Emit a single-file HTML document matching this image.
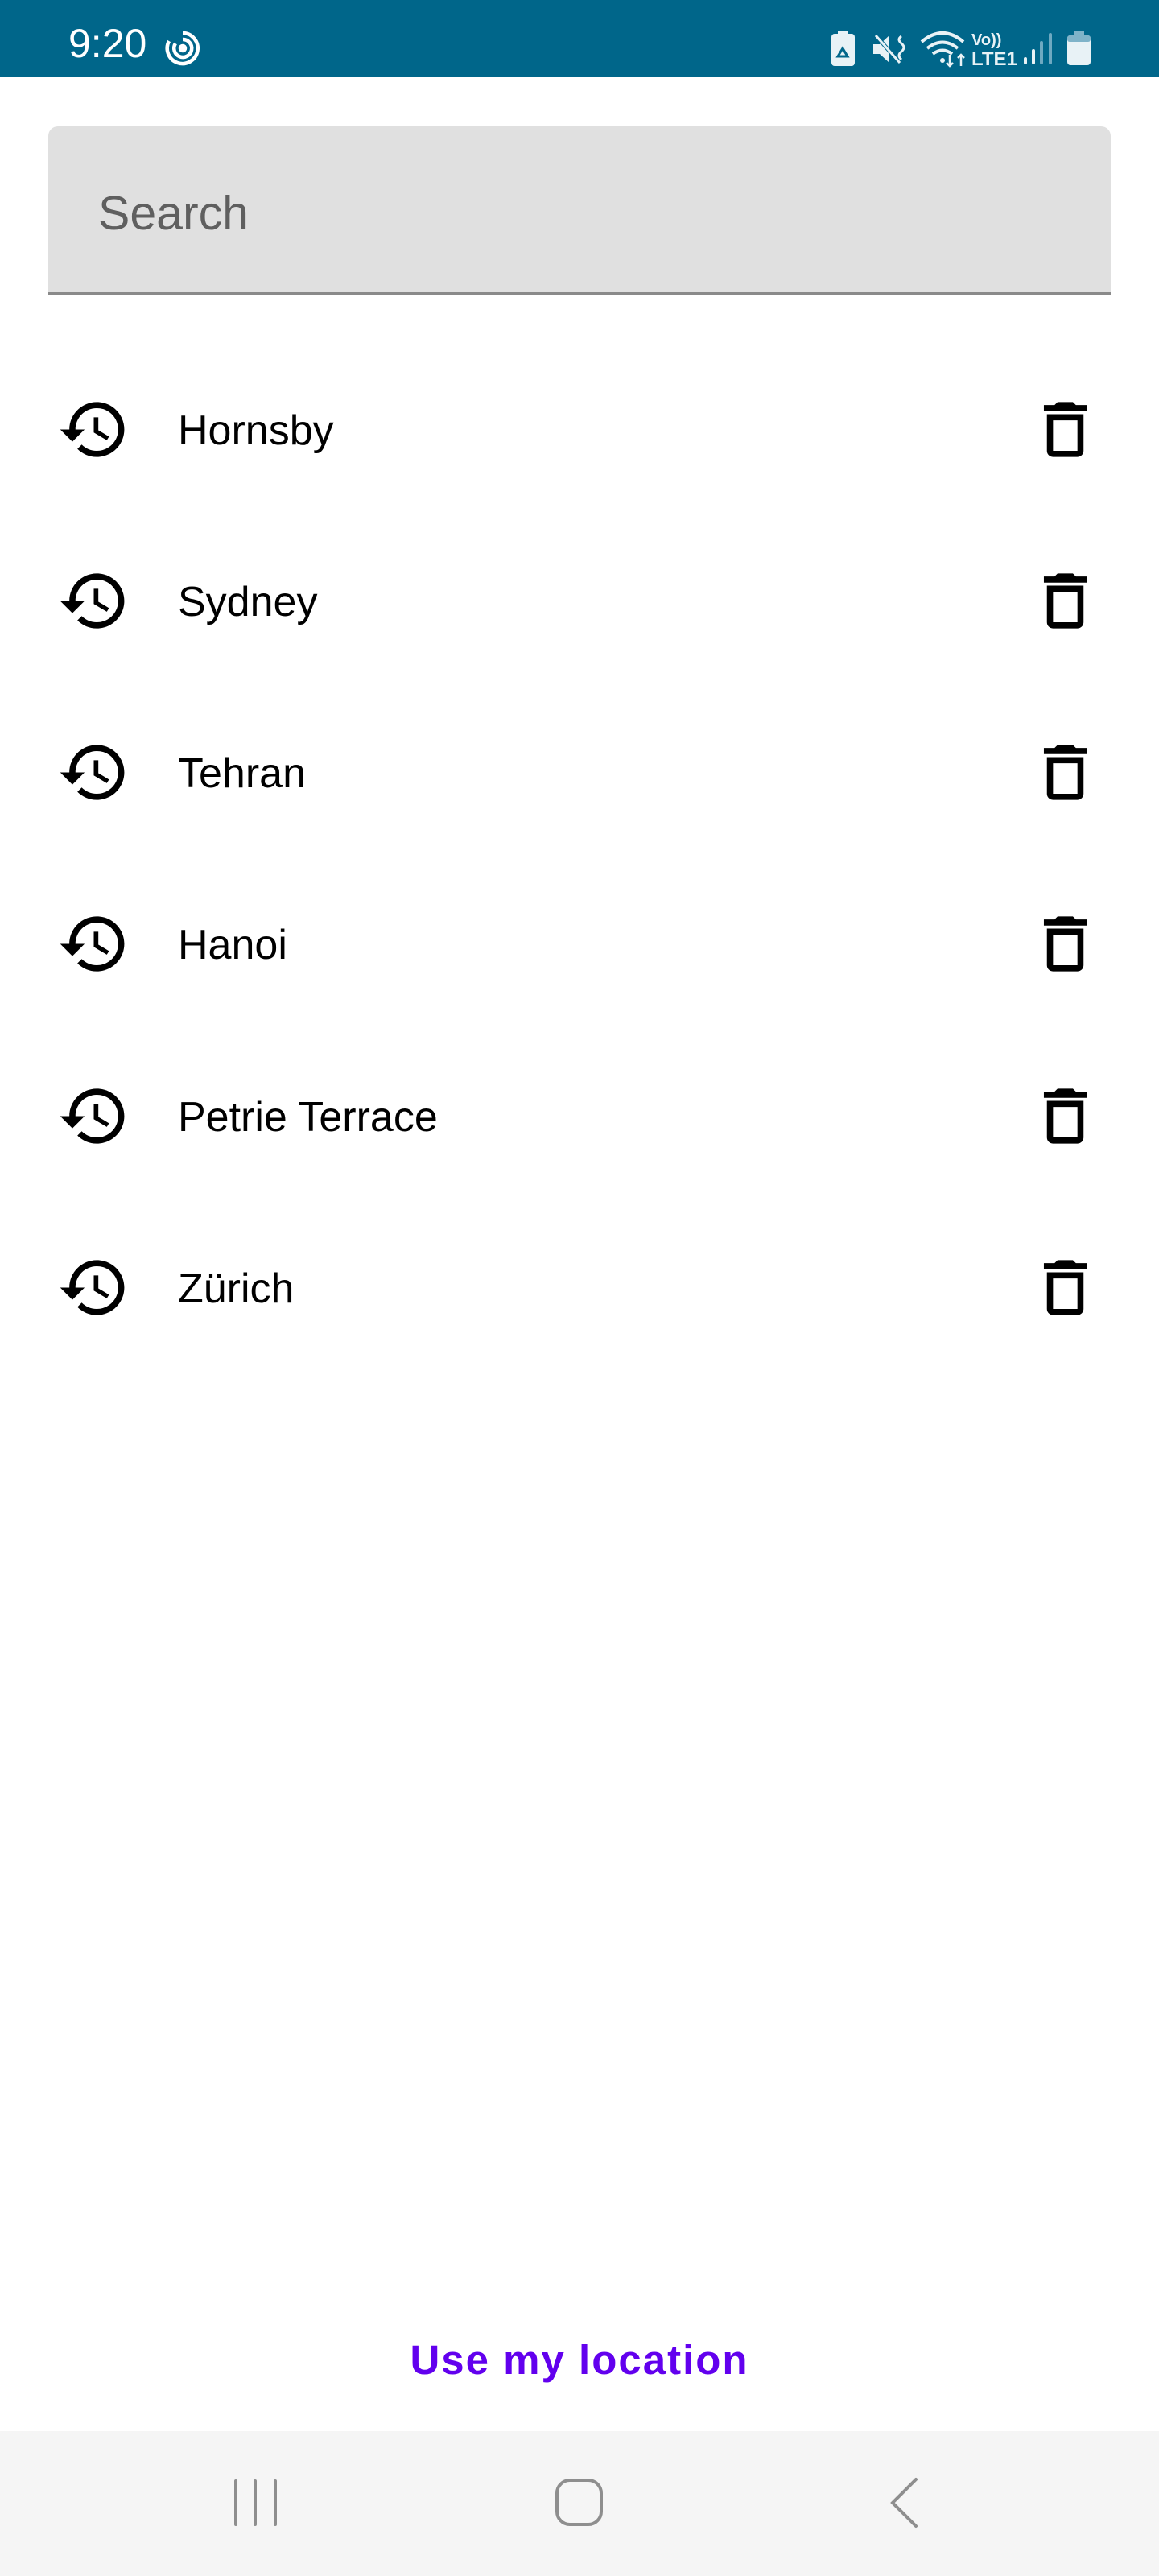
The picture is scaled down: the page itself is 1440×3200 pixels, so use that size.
<!DOCTYPE html>
<html><head><meta charset="utf-8"><style>
*{margin:0;padding:0;box-sizing:border-box}
body{width:1440px;height:3200px;background:#fff;position:relative;overflow:hidden;font-family:"Liberation Sans",Roboto,sans-serif}
.status{position:absolute;left:0;top:0;width:1440px;height:96px;background:#00668a}
.time{position:absolute;left:85px;top:26px;color:#fff;font-size:50px;line-height:56px}
.search{position:absolute;left:60px;top:157px;width:1320px;height:209px;background:#e0e0e0;border-radius:12px 12px 0 0;border-bottom:3px solid #8a8a8a}
.search span{position:absolute;left:62px;top:74px;font-size:59px;color:#5f5f5f;line-height:68px}
.row{position:absolute;left:0;width:1440px;height:213px}
.row .h{position:absolute;left:71px;top:-45px}
.row .t{position:absolute;left:1278px;top:-45px}
.row .n{position:absolute;left:221px;top:-28px;font-size:52px;line-height:60px;color:#000}
.loc{position:absolute;left:0;width:1440px;top:2900px;text-align:center;color:#6200ee;font-size:51px;font-weight:bold;letter-spacing:2px;line-height:64px}
.nav{position:absolute;left:0;top:3020px;width:1440px;height:180px;background:#f5f5f5}
</style></head><body>
<div class="status">
<div class="time">9:20</div>
<svg style="position:absolute;left:203px;top:36px" width="48" height="48" viewBox="0 0 48 48" fill="none" stroke="#fff" stroke-width="4.5"><path d="M24 5a19 19 0 1 1-17 10"/><path d="M24 13a11 11 0 1 1-9 5"/><circle cx="24" cy="24" r="3" fill="#fff"/></svg>
<svg style="position:absolute;left:1030px;top:38px" width="340" height="46" viewBox="1030 38 340 46">
<rect x="1033" y="42" width="29" height="40" rx="4" fill="#e8f2f6"/><rect x="1041" y="38" width="13" height="5" fill="#e8f2f6"/>
<path d="M1041 70l6-10 6 10z" fill="none" stroke="#00668a" stroke-width="3"/>
<path d="M1085 55h8l12-11v34l-12-11h-8z" fill="#e8f2f6"/><path d="M1088 44l30 34" stroke="#00668a" stroke-width="5"/><path d="M1088 44l30 34" stroke="#e8f2f6" stroke-width="3"/>
<path d="M1120 45q-6 4 0 9q6 5 0 10q-6 5 0 10" fill="none" stroke="#e8f2f6" stroke-width="3"/>
<path d="M1145 52q26-22 52 0M1152 60q19-15 38 0M1159 67q12-9 24 0" fill="none" stroke="#e8f2f6" stroke-width="4"/>
<circle cx="1171" cy="75" r="3" fill="#e8f2f6"/><path d="M1180 68v14M1176 78l4 4 4-4M1194 82v-14M1190 72l4-4 4 4" stroke="#e8f2f6" stroke-width="2.5" fill="none"/>
<text x="1207" y="56" fill="#e8f2f6" font-family="Liberation Sans" font-size="20" font-weight="bold">Vo))</text>
<text x="1207" y="81" fill="#e8f2f6" font-family="Liberation Sans" font-size="24" font-weight="bold">LTE1</text>
<rect x="1272" y="71" width="4" height="9" rx="2" fill="#e8f2f6"/><rect x="1282" y="61" width="4" height="19" rx="2" fill="#e8f2f6"/><rect x="1292" y="51" width="4" height="29" rx="2" fill="#6ea9c1"/><rect x="1303" y="41" width="4" height="39" rx="2" fill="#6ea9c1"/>
<rect x="1326" y="44" width="29" height="37" rx="4" fill="#e8f2f6"/><rect x="1334" y="39" width="13" height="6" fill="#7fb3c9"/><rect x="1326" y="44" width="29" height="8" rx="3" fill="#7fb3c9"/>
</svg>
</div>
<div class="search"><span>Search</span></div>

<div class="row" style="top:533px"><svg class="h" width="91" height="91" viewBox="0 0 24 24"><path d="M13 3c-4.97 0-9 4.03-9 9H1l3.89 3.89.07.14L9 12H6c0-3.870 3.13-7 7-7s7 3.13 7 7-3.13 7-7 7c-1.930 0-3.68-.79-4.94-2.06l-1.42 1.42C8.27 19.99 10.51 21 13 21c4.97 0 9-4.03 9-9s-4.03-9-9-9zm-1 5v5l4.28 2.54.72-1.21-3.5-2.08V8H12z"/></svg><div class="n">Hornsby</div><svg class="t" width="91" height="91" viewBox="0 0 24 24"><path d="M6 19c0 1.1.9 2 2 2h8c1.1 0 2-.9 2-2V7H6v12zM8 9h8v10H8V9zm7.5-5l-1-1h-5l-1 1H5v2h14V4z"/></svg></div>
<div class="row" style="top:746px"><svg class="h" width="91" height="91" viewBox="0 0 24 24"><path d="M13 3c-4.97 0-9 4.03-9 9H1l3.89 3.89.07.14L9 12H6c0-3.870 3.13-7 7-7s7 3.13 7 7-3.13 7-7 7c-1.930 0-3.68-.79-4.94-2.06l-1.42 1.42C8.27 19.99 10.51 21 13 21c4.97 0 9-4.03 9-9s-4.03-9-9-9zm-1 5v5l4.28 2.54.72-1.21-3.5-2.08V8H12z"/></svg><div class="n">Sydney</div><svg class="t" width="91" height="91" viewBox="0 0 24 24"><path d="M6 19c0 1.1.9 2 2 2h8c1.1 0 2-.9 2-2V7H6v12zM8 9h8v10H8V9zm7.5-5l-1-1h-5l-1 1H5v2h14V4z"/></svg></div>
<div class="row" style="top:959px"><svg class="h" width="91" height="91" viewBox="0 0 24 24"><path d="M13 3c-4.97 0-9 4.03-9 9H1l3.89 3.89.07.14L9 12H6c0-3.870 3.13-7 7-7s7 3.13 7 7-3.13 7-7 7c-1.930 0-3.68-.79-4.94-2.06l-1.42 1.42C8.27 19.99 10.51 21 13 21c4.97 0 9-4.03 9-9s-4.03-9-9-9zm-1 5v5l4.28 2.54.72-1.21-3.5-2.08V8H12z"/></svg><div class="n">Tehran</div><svg class="t" width="91" height="91" viewBox="0 0 24 24"><path d="M6 19c0 1.1.9 2 2 2h8c1.1 0 2-.9 2-2V7H6v12zM8 9h8v10H8V9zm7.5-5l-1-1h-5l-1 1H5v2h14V4z"/></svg></div>
<div class="row" style="top:1172px"><svg class="h" width="91" height="91" viewBox="0 0 24 24"><path d="M13 3c-4.97 0-9 4.03-9 9H1l3.89 3.89.07.14L9 12H6c0-3.870 3.13-7 7-7s7 3.13 7 7-3.13 7-7 7c-1.930 0-3.68-.79-4.94-2.06l-1.42 1.42C8.27 19.99 10.51 21 13 21c4.97 0 9-4.03 9-9s-4.03-9-9-9zm-1 5v5l4.28 2.54.72-1.21-3.5-2.08V8H12z"/></svg><div class="n">Hanoi</div><svg class="t" width="91" height="91" viewBox="0 0 24 24"><path d="M6 19c0 1.1.9 2 2 2h8c1.1 0 2-.9 2-2V7H6v12zM8 9h8v10H8V9zm7.5-5l-1-1h-5l-1 1H5v2h14V4z"/></svg></div>
<div class="row" style="top:1386px"><svg class="h" width="91" height="91" viewBox="0 0 24 24"><path d="M13 3c-4.97 0-9 4.03-9 9H1l3.89 3.89.07.14L9 12H6c0-3.870 3.13-7 7-7s7 3.13 7 7-3.13 7-7 7c-1.930 0-3.68-.79-4.94-2.06l-1.42 1.42C8.27 19.99 10.51 21 13 21c4.97 0 9-4.03 9-9s-4.03-9-9-9zm-1 5v5l4.28 2.54.72-1.21-3.5-2.08V8H12z"/></svg><div class="n">Petrie Terrace</div><svg class="t" width="91" height="91" viewBox="0 0 24 24"><path d="M6 19c0 1.1.9 2 2 2h8c1.1 0 2-.9 2-2V7H6v12zM8 9h8v10H8V9zm7.5-5l-1-1h-5l-1 1H5v2h14V4z"/></svg></div>
<div class="row" style="top:1599px"><svg class="h" width="91" height="91" viewBox="0 0 24 24"><path d="M13 3c-4.97 0-9 4.03-9 9H1l3.89 3.89.07.14L9 12H6c0-3.870 3.13-7 7-7s7 3.13 7 7-3.13 7-7 7c-1.930 0-3.68-.79-4.94-2.06l-1.42 1.42C8.27 19.99 10.51 21 13 21c4.97 0 9-4.03 9-9s-4.03-9-9-9zm-1 5v5l4.28 2.54.72-1.21-3.5-2.08V8H12z"/></svg><div class="n">Zürich</div><svg class="t" width="91" height="91" viewBox="0 0 24 24"><path d="M6 19c0 1.1.9 2 2 2h8c1.1 0 2-.9 2-2V7H6v12zM8 9h8v10H8V9zm7.5-5l-1-1h-5l-1 1H5v2h14V4z"/></svg></div>

<div class="loc">Use my location</div>
<div class="nav">
<svg style="position:absolute;left:0;top:0" width="1440" height="180" viewBox="0 3020 1440 180" fill="none" stroke="#8e8e8e" stroke-width="4" stroke-linecap="round">
<path d="M293 3082v54M317 3082v54M342 3082v54"/>
<rect x="692" y="3081" width="55" height="55" rx="16"/>
<path d="M1138 3080l-29 29 29 29"/>
</svg>
</div>
</body></html>
